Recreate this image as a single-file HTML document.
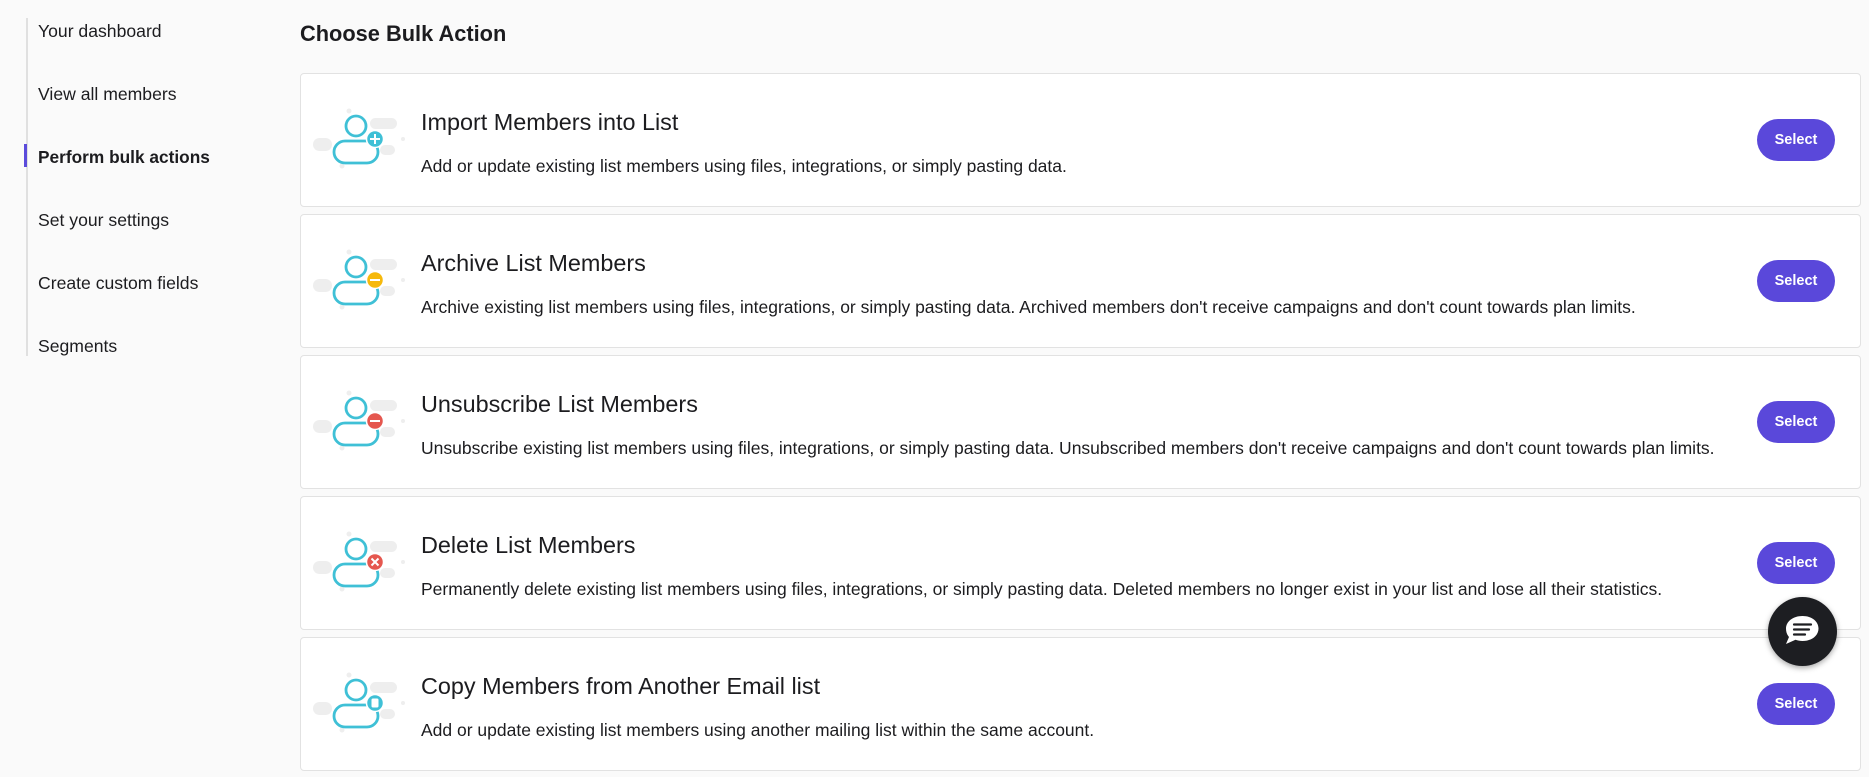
<!DOCTYPE html>
<html><head><meta charset="utf-8"><style>
*{margin:0;padding:0;box-sizing:border-box}
body{width:1869px;height:777px;background:#fafafa;font-family:"Liberation Sans",sans-serif;color:#1c1c1f;position:relative;overflow:hidden}
.side{position:absolute;left:26px;top:18px;width:2px;height:338px;background:#e0e0e0}
.nav{position:absolute;left:38px;font-size:17.6px;line-height:20px}
.nav.b{font-weight:bold;font-size:17.3px}
.bar{position:absolute;left:24px;top:144px;width:3px;height:23px;background:#5b4bdb}
h1{position:absolute;left:300px;top:21px;font-size:21.8px;font-weight:bold}
.card{position:absolute;left:300px;width:1561px;height:134px;background:#fff;border:1px solid #e2e2e2;border-radius:4px}
.card svg{position:absolute;left:0;top:0}
.t{position:absolute;left:120px;top:35px;font-size:23.4px;line-height:27px;white-space:nowrap}
.d{position:absolute;left:120px;top:82px;font-size:17.5px;line-height:21px;white-space:nowrap}
.btn{position:absolute;left:1456px;top:45px;width:78px;height:42px;border-radius:21px;background:#5a48da;color:#fff;font-weight:bold;font-size:14.5px;text-align:center;line-height:42px}
.chat{position:absolute;left:1768px;top:597px;width:69px;height:69px;border-radius:50%;background:#1d1e22;box-shadow:0 2px 6px rgba(0,0,0,.35)}
</style></head><body>
<div class="side"></div><div class="bar"></div>
<div class="nav" style="top:21px">Your dashboard</div>
<div class="nav" style="top:84px">View all members</div>
<div class="nav b" style="top:147px">Perform bulk actions</div>
<div class="nav" style="top:210px">Set your settings</div>
<div class="nav" style="top:273px">Create custom fields</div>
<div class="nav" style="top:336px">Segments</div>
<h1>Choose Bulk Action</h1>

<div class="card" style="top:73px">
<svg width="110" height="134"><g fill="#eeeeee"><rect x="12" y="64" width="19" height="13" rx="6.5"/><rect x="69" y="44" width="27" height="11" rx="5.5"/><rect x="79" y="71" width="15" height="10" rx="5"/><circle cx="48" cy="37" r="2.5"/><circle cx="102" cy="65" r="2"/><circle cx="41" cy="92" r="2.5"/></g><g fill="none" stroke="#3fc0d6" stroke-width="2.8"><circle cx="55" cy="52" r="10"/><rect x="33" y="67" width="44" height="22" rx="11"/></g>
<circle cx="74" cy="65" r="8.5" fill="#3fc0d6" stroke="#fff" stroke-width="1.5"/><path d="M74 60v10M69 65h10" stroke="#fff" stroke-width="2"/></svg>
<div class="t">Import Members into List</div>
<div class="d">Add or update existing list members using files, integrations, or simply pasting data.</div>
<div class="btn">Select</div></div>

<div class="card" style="top:214px">
<svg width="110" height="134"><g fill="#eeeeee"><rect x="12" y="64" width="19" height="13" rx="6.5"/><rect x="69" y="44" width="27" height="11" rx="5.5"/><rect x="79" y="71" width="15" height="10" rx="5"/><circle cx="48" cy="37" r="2.5"/><circle cx="102" cy="65" r="2"/><circle cx="41" cy="92" r="2.5"/></g><g fill="none" stroke="#3fc0d6" stroke-width="2.8"><circle cx="55" cy="52" r="10"/><rect x="33" y="67" width="44" height="22" rx="11"/></g>
<circle cx="74" cy="65" r="8.5" fill="#f6b90c" stroke="#fff" stroke-width="1.5"/><path d="M69 65h10" stroke="#fff" stroke-width="2"/></svg>
<div class="t">Archive List Members</div>
<div class="d">Archive existing list members using files, integrations, or simply pasting data. Archived members don't receive campaigns and don't count towards plan limits.</div>
<div class="btn">Select</div></div>

<div class="card" style="top:355px">
<svg width="110" height="134"><g fill="#eeeeee"><rect x="12" y="64" width="19" height="13" rx="6.5"/><rect x="69" y="44" width="27" height="11" rx="5.5"/><rect x="79" y="71" width="15" height="10" rx="5"/><circle cx="48" cy="37" r="2.5"/><circle cx="102" cy="65" r="2"/><circle cx="41" cy="92" r="2.5"/></g><g fill="none" stroke="#3fc0d6" stroke-width="2.8"><circle cx="55" cy="52" r="10"/><rect x="33" y="67" width="44" height="22" rx="11"/></g>
<circle cx="74" cy="65" r="8.5" fill="#e5574f" stroke="#fff" stroke-width="1.5"/><path d="M69 65h10" stroke="#fff" stroke-width="2"/></svg>
<div class="t">Unsubscribe List Members</div>
<div class="d">Unsubscribe existing list members using files, integrations, or simply pasting data. Unsubscribed members don't receive campaigns and don't count towards plan limits.</div>
<div class="btn">Select</div></div>

<div class="card" style="top:496px">
<svg width="110" height="134"><g fill="#eeeeee"><rect x="12" y="64" width="19" height="13" rx="6.5"/><rect x="69" y="44" width="27" height="11" rx="5.5"/><rect x="79" y="71" width="15" height="10" rx="5"/><circle cx="48" cy="37" r="2.5"/><circle cx="102" cy="65" r="2"/><circle cx="41" cy="92" r="2.5"/></g><g fill="none" stroke="#3fc0d6" stroke-width="2.8"><circle cx="55" cy="52" r="10"/><rect x="33" y="67" width="44" height="22" rx="11"/></g>
<circle cx="74" cy="65" r="8.5" fill="#e5574f" stroke="#fff" stroke-width="1.5"/><path d="M70.5 61.5l7 7M77.5 61.5l-7 7" stroke="#fff" stroke-width="2"/></svg>
<div class="t">Delete List Members</div>
<div class="d">Permanently delete existing list members using files, integrations, or simply pasting data. Deleted members no longer exist in your list and lose all their statistics.</div>
<div class="btn">Select</div></div>

<div class="card" style="top:637px">
<svg width="110" height="134"><g fill="#eeeeee"><rect x="12" y="64" width="19" height="13" rx="6.5"/><rect x="69" y="44" width="27" height="11" rx="5.5"/><rect x="79" y="71" width="15" height="10" rx="5"/><circle cx="48" cy="37" r="2.5"/><circle cx="102" cy="65" r="2"/><circle cx="41" cy="92" r="2.5"/></g><g fill="none" stroke="#3fc0d6" stroke-width="2.8"><circle cx="55" cy="52" r="10"/><rect x="33" y="67" width="44" height="22" rx="11"/></g>
<circle cx="74" cy="65" r="8.5" fill="#3fc0d6" stroke="#fff" stroke-width="1.5"/><rect x="70.5" y="60.5" width="7" height="9" rx="1.5" fill="#fff"/></svg>
<div class="t">Copy Members from Another Email list</div>
<div class="d">Add or update existing list members using another mailing list within the same account.</div>
<div class="btn">Select</div></div>

<div class="chat"><svg width="69" height="69" viewBox="0 0 69 69"><path d="M34.5 19c9.5 0 16 5.5 16 12.5S44 44 34.5 44c-2.5 0-5-.4-7-1.2L18 47l3-7c-2-2.3-3-5-3-8.5C18 24.5 25 19 34.5 19z" fill="#fff"/><path d="M26 27.5h17M26 32.5h15M26 37.5h11" stroke="#1d1e22" stroke-width="2.2" stroke-linecap="round"/></svg></div>
</body></html>
